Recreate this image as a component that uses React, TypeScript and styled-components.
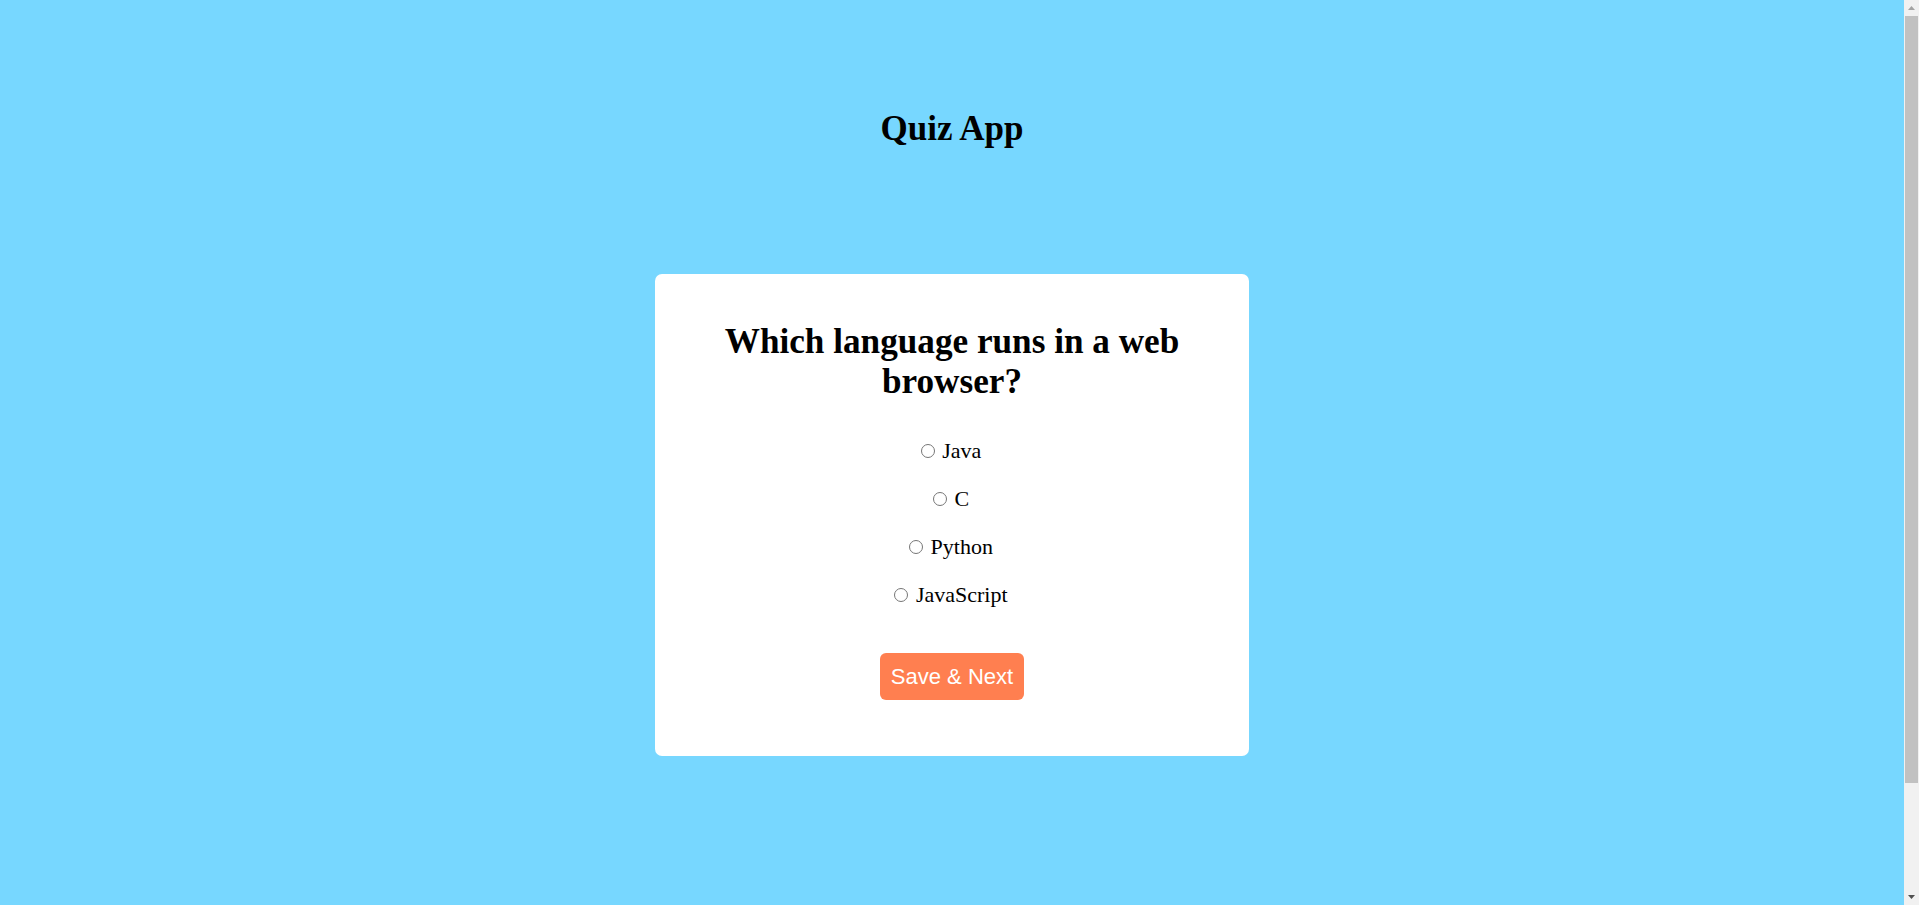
import React, { useState } from "react";
import styled, { createGlobalStyle } from "styled-components";

const GlobalStyle = createGlobalStyle`
  html, body {
    margin: 0;
    padding: 0;
  }
  body {
    background: #77d7ff;
    font-family: "Liberation Serif", "Times New Roman", serif;
    color: #000;
  }
`;

const Page = styled.div`
  display: flex;
  flex-direction: column;
  align-items: center;
  padding: 109px 15px 273px 0;
`;

const Title = styled.h1`
  margin: 0;
  font-size: 35px;
  line-height: 40px;
  font-weight: bold;
`;

const Card = styled.div`
  margin-top: 125px;
  width: 594px;
  box-sizing: border-box;
  padding: 48px 40px 56px;
  background: #ffffff;
  border-radius: 7px;
  text-align: center;
`;

const Question = styled.h2`
  margin: 0;
  font-size: 35.2px;
  line-height: 40.4px;
  font-weight: bold;
`;

const Options = styled.div`
  margin-top: 35px;
  display: flex;
  flex-direction: column;
  gap: 23px;
`;

const OptionRow = styled.label`
  display: block;
  padding-right: 7px;
  font-size: 22px;
  line-height: 25px;
  cursor: pointer;
`;

const Radio = styled.input`
  width: 14px;
  height: 14px;
  margin: 0 2px 0 5px;
  vertical-align: 0px;
`;

const SaveButton = styled.button`
  margin-top: 46px;
  padding: 11px 11px;
  border: none;
  border-radius: 6px;
  background: #ff7f50;
  color: #ffffff;
  font-family: "Liberation Sans", Arial, sans-serif;
  font-size: 22px;
  line-height: 25px;
  cursor: pointer;
`;

/* Imitation of the browser's classic scrollbar seen in the screenshot */
const ScrollBar = styled.div`
  position: fixed;
  top: 0;
  right: 0;
  width: 15px;
  height: 100vh;
  background: #f1f1f1;
  display: flex;
  flex-direction: column;
  align-items: center;
`;

const ScrollArrow = styled.div`
  height: 16px;
  width: 15px;
  display: flex;
  align-items: center;
  justify-content: center;
`;

const ScrollThumb = styled.div`
  width: 13px;
  height: 767px;
  background: #c1c1c1;
`;

const ScrollSpacer = styled.div`
  flex: 1;
`;

const options = ["Java", "C", "Python", "JavaScript"];

export default function App() {
  const [selected, setSelected] = useState<string | null>(null);
  return (
    <>
      <GlobalStyle />
      <Page>
        <Title>Quiz App</Title>
        <Card>
          <Question>Which language runs in a web browser?</Question>
          <Options>
            {options.map((o) => (
              <OptionRow key={o}>
                <Radio
                  type="radio"
                  name="answer"
                  value={o}
                  checked={selected === o}
                  onChange={() => setSelected(o)}
                />{" "}
                {o}
              </OptionRow>
            ))}
          </Options>
          <SaveButton type="button">Save &amp; Next</SaveButton>
        </Card>
      </Page>
      <ScrollBar aria-hidden="true">
        <ScrollArrow>
          <svg width="7" height="4" viewBox="0 0 7 4">
            <path d="M0 4 L3.5 0 L7 4 Z" fill="#a3a3a3" />
          </svg>
        </ScrollArrow>
        <ScrollThumb />
        <ScrollSpacer />
        <ScrollArrow>
          <svg width="7" height="4" viewBox="0 0 7 4">
            <path d="M0 0 L3.5 4 L7 0 Z" fill="#505050" />
          </svg>
        </ScrollArrow>
      </ScrollBar>
    </>
  );
}
